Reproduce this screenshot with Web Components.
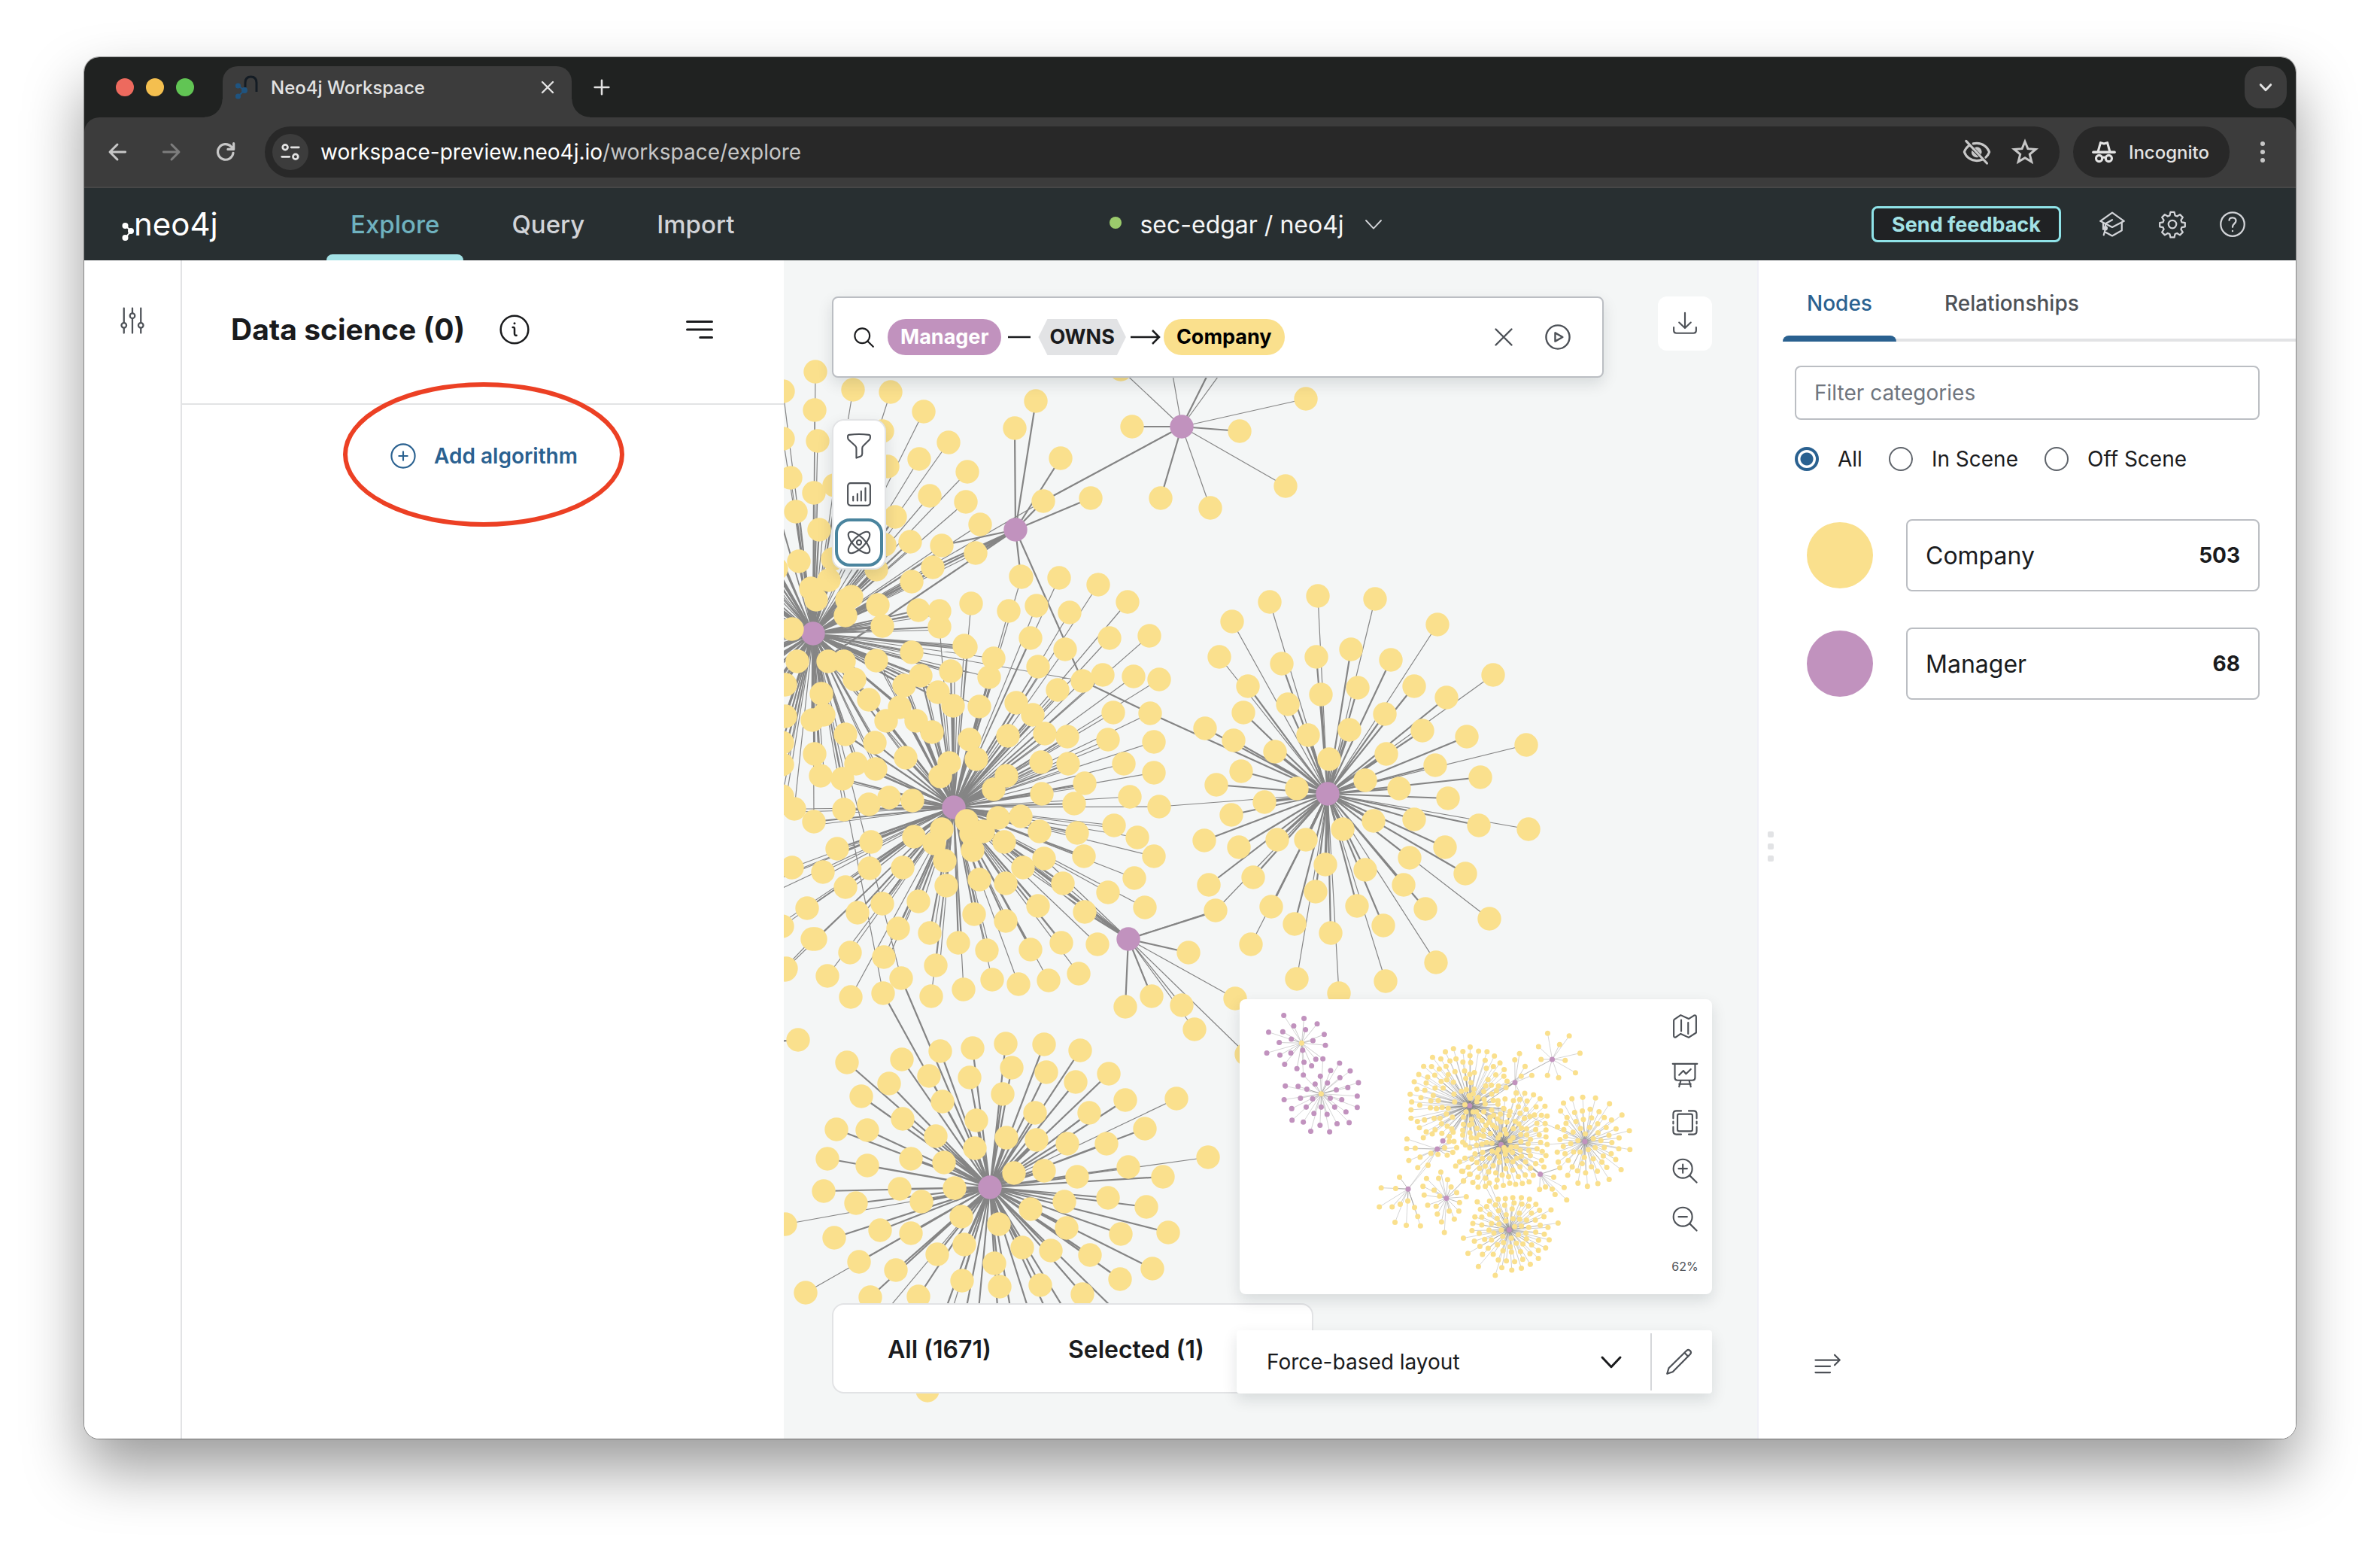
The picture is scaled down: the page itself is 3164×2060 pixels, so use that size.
<!DOCTYPE html>
<html lang="en">
<head>
<meta charset="utf-8">
<title>Neo4j Workspace</title>
<style>
  html { background: #fff; }
  body {
    margin: 0; box-sizing: border-box; min-height: 100vh; overflow: hidden;
    padding: 76px 112px 148px; display: flex;
    font-family: Inter, "Liberation Sans", sans-serif; font-size: 28px; color: #1a1b1d;
  }
</style>
</head>
<body>
<browser-window></browser-window>

<script>
/* ---------- icons ---------- */
const ICONS = {
  close: '<path d="M5 5 19 19M19 5 5 19"/>',
  plus: '<path d="M12 4V20M4 12H20"/>',
  chevron: '<path d="M4 8 12 16.500 20 8"/>',
  back: '<path d="M20 12H5M12 4.500 4.500 12 12 19.500"/>',
  forward: '<path d="M4 12H19M12 4.500 19.500 12 12 19.500"/>',
  reload: '<path d="M19.500 13A7.700 7.700 0 1 1 17.500 6.700L19.500 8.700M20 3.500V9.300H14.200"/>',
  tune: '<circle cx="6.500" cy="7" r="2.700"/><path d="M13 7H21M3 17H11"/><circle cx="17.500" cy="17" r="2.700"/>',
  eyeoff: '<path d="M5.800 6.300C3.500 8 2 10 1.500 12c1.500 4.300 5.500 7.300 10.500 7.300 1.800 0 3.400-.4 4.800-1M9 5c1-.2 2-.3 3-.3 5 0 9 3 10.500 7.300-.6 1.800-1.600 3.300-3 4.500M3 2.800 20.500 21.500"/><path d="M12 7.800a4.200 4.200 0 0 1 4.200 4.200L15.500 14.200 10 8.400ZM7.900 10.600 13.600 16.200A4.300 4.300 0 0 1 7.900 10.600Z" fill="currentColor" stroke="none"/>',
  star: '<path d="M12 2.800 14.600 9.100 21.500 9.600 16.200 14 17.900 20.700 12 17.100 6.100 20.700 7.800 14 2.500 9.600 9.400 9.100Z" stroke-linejoin="miter"/>',
  incognito: '<path d="M2 12.200H22" stroke-width="2.400"/><path d="M6.500 11.500 8.800 3.300 12 4.200 15.200 3.300 17.500 11.500"/><circle cx="7.500" cy="18" r="2.900"/><circle cx="16.500" cy="18" r="2.900"/><path d="M10.400 17.500Q12 16.400 13.600 17.500"/>',
  dots: '<g fill="currentColor" stroke="none"><circle cx="12" cy="4.700" r="2"/><circle cx="12" cy="12" r="2"/><circle cx="12" cy="19.300" r="2"/></g>',
  cap: '<path d="M1.500 9.200 12 1.800 22.500 9.200 12 14.600Z"/><path d="M20.500 10.500V17.500L12 22.300 6.500 19.300M4 11V16.500M12 8.200 6 11.500V16L4.500 21.500"/><circle cx="6" cy="15.500" r="1.300"/>',
  gear: '<circle cx="12" cy="12" r="3.500"/><path d="M10.300 1.300h3.400l.7 3 1.700.7 2.600-1.600 2.500 2.500-1.600 2.500.7 1.800 2.900.6v3.400l-2.900.6-.7 1.700 1.600 2.600-2.500 2.500-2.600-1.600-1.700.7-.7 2.900h-3.400l-.7-2.900-1.700-.7-2.600 1.600-2.500-2.500 1.600-2.600-.7-1.700-2.900-.6v-3.400l2.900-.6.7-1.800-1.600-2.500 2.500-2.500 2.600 1.600 1.700-.7z"/>',
  help: '<circle cx="12" cy="12" r="10.500"/><path d="M9 8.500C9.300 5.500 15 5.500 15 9c0 2.500-3 2.500-3 5.500"/><circle cx="12" cy="18" r=".8" fill="currentColor" stroke="none"/>',
  info: '<circle cx="12" cy="12" r="11"/><path d="M10.600 10.200Q12.200 10 12 11.500V15.200Q12 17 13.600 16.700"/><circle cx="12" cy="7" r=".9" fill="currentColor" stroke="none"/>',
  sliders: '<path d="M4.500 1V14M4.500 18.500V23M12 1V5.500M12 10V23M19.500 1V14M19.500 18.500V23"/><circle cx="4.500" cy="16.200" r="2.200"/><circle cx="12" cy="7.800" r="2.200"/><circle cx="19.500" cy="16.200" r="2.200"/>',
  menu: '<path d="M1 5H23M1 12H23M12.500 19H23"/>',
  add: '<circle cx="12" cy="12" r="11"/><path d="M12 8V16M8 12H16"/>',
  search: '<circle cx="10.500" cy="10.500" r="8.500"/><path d="M16.700 16.700 23 23"/>',
  play: '<circle cx="12" cy="12" r="11"/><path d="M9.500 8V16L16.500 12Z"/>',
  download: '<path d="M12 2V16M6.500 11 12 16.300 17.500 11M1.500 15.500V18.500Q1.500 21 4 21H20Q22.500 21 22.500 18.500V15.500"/>',
  funnel: '<path d="M1.500 2.500Q1.500 1.500 3 1.300 12 .2 21 1.300 22.500 1.500 22.500 2.500V4Q22.500 5.200 21.700 6L16 11.700Q15 12.700 15 14V19Q15 20.800 13.500 21.500L9.500 23V14.500Q9.500 12.700 8.500 11.700L2.300 6Q1.500 5.200 1.500 4Z"/>',
  chart: '<rect x="1.500" y="1.500" width="21" height="21" rx="2.500"/><path d="M6.500 14V18M10.500 11.500V18M14 9V18M18 6V18"/>',
  atom: '<circle cx="12" cy="12" r="2.300"/><ellipse cx="12" cy="12" rx="14" ry="5.600" transform="rotate(45 12 12)"/><ellipse cx="12" cy="12" rx="14" ry="5.600" transform="rotate(-45 12 12)"/>',
  map: '<path d="M2 5.500 8 1.500 15.500 5 20.500 1.800Q22.500 1.300 22.500 3V18L15.500 22.500 8 19 3.500 22.200Q1.500 22.800 1.500 21V6.500Z"/><path d="M8.500 6V16.500M15 8.500V19"/>',
  board: '<path d="M.5 2H23.500M2.500 2V15Q2.500 17.500 5 17.500H19Q21.500 17.500 21.500 15V2M8 18 6.500 23.500M16 18 17.500 23.500M6.500 21H17.500M6.500 12.500 10.500 8.500 13 11.500 17.500 7"/>',
  fit: '<rect x="5" y="4" width="14" height="16" rx="1.500"/><path d="M1 8V4Q1 1 4 1H8.500M15.500 1H20Q23 1 23 4V8M23 16V20Q23 23 20 23H15.500M8.500 23H4Q1 23 1 20V16M1 11V13M23 11V13"/>',
  zoomin: '<circle cx="10" cy="10" r="8.800"/><path d="M16.500 16.500 23 23M10 6V14M6 10H14"/>',
  zoomout: '<circle cx="10" cy="10" r="8.800"/><path d="M16.500 16.500 23 23M6 10H14"/>',
  pencil: '<path d="M1.500 22.500 3 17.500 18.800 2Q20.500.6 22 2.200 23.300 3.700 22 5.200L6.500 20.800ZM17 4 20.200 7.200"/>',
  collapse: '<path d="M1 9H22.500M18 4.500 22.500 9 18 13.500M1 14.500H14M1 20H14"/>'
};

customElements.define('ui-icon', class extends HTMLElement {
  constructor() { super(); this.attachShadow({ mode: 'open' }); }
  connectedCallback() {
    const size = this.getAttribute('size') || 36;
    const weight = this.getAttribute('weight') || 1.5;
    this.shadowRoot.innerHTML = `
      <style>
        :host { display: block; flex: none; width: ${size}px; height: ${size}px; }
        svg { display: block; width: 100%; height: 100%; overflow: visible; fill: none; stroke: currentColor;
              stroke-width: ${weight}; stroke-linecap: round; stroke-linejoin: round; }
      </style>
      <svg viewBox="0 0 24 24" aria-hidden="true">${ICONS[this.getAttribute('name')]}</svg>`;
  }
});

/* Registers an element whose shadow root is cloned from the given markup. */
function component(name, markup) {
  const template = document.createElement('template');
  template.innerHTML = markup;
  customElements.define(name, class extends HTMLElement {
    constructor() {
      super();
      this.attachShadow({ mode: 'open' }).append(template.content.cloneNode(true));
    }
  });
}
const BUTTON = 'button { font: inherit; color: inherit; background: none; border: 0; padding: 0; margin: 0; display: flex; align-items: center; justify-content: center; }';

/* ---------- graph data: each tile is [originX, originY, scaleX, scaleY] ---------- */
const HUBS = {
  A: [1081, 842], B: [1350, 704], C: [1571, 567], D: [1268, 1073], E: [1765, 1055], F: [1500, 1248], G: [1316, 1578],
  H: [889, 1099], I: [922, 1050], J: [716, 1336], K: [943, 1391], L: [84, 470], M: [200, 771]
};
const TILES = [
  { t: [1040, 370, 1 / 2.24, 1 / 2.306], groups: {
    A: '2,345 98,287 97,404 210,342 323,349 421,408 106,498 2,492 298,469 25,611 94,658 40,716 313,577 408,554 496,503 550,593 155,633 440,667 336,732 547,685 590,753 110,771 49,867 304,817 380,806 475,818 150,860 449,885 576,841 279,893 -18,890',
    B: '754,376 692,460 829,552 919,674 778,682 711,914 576,841 475,818 449,885 386,929',
    C: '1008,278 1042,454 1363,467 1127,673 1275,703 1498,637 1558,368 778,682' } },
  { t: [1040, 750, 1 / 2.45, 1 / 2.529], groups: {
    A: '92,80 110,120 152,52 225,108 210,118 205,172 310,136 327,208 421,57 443,155 512,158 512,210 33,218 50,325 150,327 202,327 306,323 421,297 593,272 597,278 450,375 397,406 234,388 127,434 282,454 383,480 10,404 10,510 135,505 98,523 338,527 437,527 508,431 549,360 557,475 673,380 689,315 207,572 106,637 126,711 197,720 302,600 240,670 304,688 403,650 487,565 641,477 0,600 0,672 0,780 40,822 201,825 102,866 977,393 329,1442 387,1391',
    D: '615,131 779,42 902,46 1028,69 1125,127 738,157 828,138 937,163 1066,247 1195,239 808,247 922,285 834,344 1044,373 977,393 897,423 1144,378 1228,388 763,466 815,506 1077,497 1198,502 855,570 929,580 735,577 609,590 1062,590 1211,598 632,656 543,668 515,713 842,665 930,671 1113,671 1211,700 729,710 688,755 984,736 846,772 951,804 1133,782 1227,815 600,862 519,889 703,853 776,847 615,905 655,898 620,960 723,934 837,898 960,902 1080,878 1157,918 1211,982 982,980 853,990 783,1020 727,1072 643,1060 913,1072 1147,1055 1060,1102 1181,1154 985,1169 832,1149 728,1199 624,1177 534,1080 530,997 495,937 428,915 290,933 180,957 391,1020 285,1022 132,1034 33,1018 205,1085 443,1133 325,1140 244,1171 80,1157 378,1225 479,1239 573,1271 667,1298 808,1296 908,1271 1026,1276 966,1376 868,1399 770,1411 684,1396 591,1428 501,1349 484,1452 330,1319 222,1453 146,1384 220,1305 109,1260 12,1358 0,1217 282,808 349,784 425,794 450,375 397,406 383,480 338,527 437,527 508,431 549,360 557,475 673,380 689,315 207,572 302,600 240,670 304,688 403,650 487,565 641,477 197,720 282,454 201,825 40,822 102,866 512,210 593,272 306,323 234,388 150,327',
    F: '1322,1305 1116,1486 1204,1451 1300,1481 1475,1458 1342,1563 1412,1164 985,1169 913,1072 853,990 783,1020 723,934',
    E: '1412,1164 1227,815' } },
  { t: [1540, 370, 1 / 2.0103, 1 / 1.6333], groups: {
    E: '298,702 427,689 579,695 746,751 197,745 163,821 329,837 422,821 514,805 622,828 894,861 240,885 345,924 435,904 532,889 684,886 770,909 228,943 606,945 400,991 511,980 705,982 824,995 983,1012 124,977 201,1003 312,1028 456,1043 609,1032 739,1056 861,1083 222,1069 552,1089 155,1100 369,1107 643,1107 774,1128 283,1137 196,1165 122,1220 216,1234 317,1218 394,1218 493,1196 574,1178 683,1174 857,1188 989,1196 765,1234 446,1272 552,1283 671,1258 820,1292 135,1317 254,1300 421,1331 656,1316 713,1368 885,1390 301,1363 364,1401 460,1421 531,1362 601,1405 248,1446 369,1521 483,1552 608,1525 742,1485' } },
  { t: [1040, 1300, 1 / 2.24, 1 / 2.376], groups: {
    F: '1382,241',
    K: '48,195',
    G: '192,265 356,256 471,230 566,221 665,206 780,209 888,228 318,333 436,310 558,314 683,282 787,297 874,328 973,302 235,373 477,389 657,366 753,425 915,425 1022,386 1173,380 162,478 252,481 358,445 458,500 578,449 574,538 668,504 758,510 848,523 966,522 1080,476 134,571 254,591 382,571 482,581 689,615 780,608 879,627 1031,597 1134,628 1267,565 123,672 219,710 349,666 415,706 512,664 840,705 969,693 1084,722 1150,803 1007,808 740,730 847,788 8,777 155,820 291,795 383,806 532,754 645,778 228,895 338,923 461,871 543,840 714,851 800,859 917,875 1103,918 1005,951 632,901 535,954 647,973 768,970 894,997 70,992 262,1007 406,1004 432,1303' } },
  { t: [-500, 87, 2.107, 1.767], groups: {
    G: '775,967 841,971 869,979 896,973 921,960 944,940 831,945 854,948 877,951 900,943',
    C: '970,184 1031,193 1004,222',
    D: '722,615 711,630 728,647',
    A: '705,236 682,246 646,265 669,270 712,270 695,277 621,295 643,296 684,295 607,322 632,331 652,325 665,304 690,323 709,313 594,347 628,351 670,346 686,340 705,348 602,372 624,375 653,368 676,368 706,388 583,389 648,392 587,414 613,400 641,411 662,410 673,433 585,441 610,425 640,434 657,437 585,469 603,480 623,475 650,470 667,470 708,414 690,436 685,455 702,466 609,501 628,515 653,508 671,488 687,496 645,522 700,505 620,534 672,520 693,531 704,516 675,545 659,573',
    H: '574,539 573,571 597,570 579,611 611,600 641,587 661,591 680,569 604,635 633,627 687,593 703,584 693,547 706,547 714,568 577,707',
    J: '501,703 542,705 553,667 496,767 532,767 555,758 576,747 595,769 604,799 540,819 572,829 612,831 633,627',
    K: '629,672 663,671 669,650 688,675 619,698 650,711 698,700 714,719 722,752 720,781 693,781 707,808 671,817 659,791 679,853 656,765 632,761 622,727 666,731 733,680 750,657',
    L: '227,124 284,134 321,152 255,159 288,172 184,180 224,179 341,188 248,204 309,209 214,215 344,224 179,250 216,257 247,250 280,241 229,288 264,303 284,281 305,293 317,271 337,270 282,324',
    M: '384,284 359,309 414,310 330,328 385,333 315,354 350,351 437,350 231,361 267,362 292,372 375,374 407,366 434,395 228,407 274,402 308,404 358,402 390,407 249,437 290,432 332,432 370,432 434,433 402,448 312,453 349,456 250,476 282,482 329,493 377,488 411,484 303,513 356,515 337,270 282,324' } }
];

function buildGraph() {
  const nodes = new Map(), edges = { thin: '', mid: '', thick: '' };
  const hubPoints = Object.values(HUBS);
  for (const { t, groups } of TILES)
    for (const [hub, list] of Object.entries(groups))
      for (const pair of list.split(' ')) {
        const [px, py] = pair.split(',').map(Number);
        const x = Math.round(t[0] + px * t[2]), y = Math.round(t[1] + py * t[3]);
        const swapped = hub === 'L' || hub === 'M';
        if (!hubPoints.some(([a, b]) => Math.hypot(a - x, b - y) < 8))
          nodes.set(x + ',' + y, [x, y, swapped ? 'm' : 'c']);
        const [hx, hy] = HUBS[hub];
        const d = Math.hypot(x - hx, y - hy);
        const near = hub === 'A' ? 130 : hub === 'C' || hub === 'B' || hub === 'F' ? 0 : 95;
        const far = hub === 'G' ? 262 : hub === 'E' ? 212 : hub === 'A' || hub === 'D' ? 190 : hub === 'F' ? 110 : hub === 'C' ? 100 : 180;
        const w = d < near ? 'thick' : d < far ? 'mid' : 'thin';
        edges[w] += `M${hx} ${hy}L${x} ${y}`;
        if ((hub === 'A' || hub === 'D') && d > 120 && d < 230) edges.thin += `M${hx} ${hy}L${x + 5} ${y + 4}`;
      }
  edges.mid += 'M1350 704L1439 905L1529 948L1765 1055M1571 567L1387 666M1350 704L1120 860M1350 704L1105 870M1198 1300L1316 1578M1174 1320L1316 1578M1500 1248L1617 1211';
  edges.thin += 'M1387 666L1081 842';
  edges.thick += 'M1500 1248L1268 1073M1350 704L1297 735';
  const circle = ([x, y, k]) => `<circle class="${k}" cx="${x}" cy="${y}" r="15.700"/>`;
  const hubs = Object.entries(HUBS).map(([k, [x, y]]) => [x, y, k === 'L' || k === 'M' ? 'c' : 'm']);
  return `<path class="thin" d="${edges.thin}"/><path class="mid" d="${edges.mid}"/><path class="thick" d="${edges.thick}"/>`
    + hubs.map(circle).join('') + [...nodes.values()].map(circle).join('');
}

customElements.define('graph-view', class extends HTMLElement {
  constructor() { super(); this.attachShadow({ mode: 'open' }); }
  connectedCallback() {
    const mini = this.hasAttribute('overview');
    this.shadowRoot.innerHTML = `
      <style>
        :host { display: block; overflow: hidden; }
        svg { display: block; width: 100%; height: 100%; }
        path { fill: none; stroke: #858585; }
        .thin { stroke-width: ${mini ? 2.5 : 1.2}; } .mid { stroke-width: ${mini ? 3 : 2.2}; } .thick { stroke-width: ${mini ? 4 : 3.4}; }
        ${mini ? 'path { opacity: .6; }' : ''}
        .c { fill: #fae08d; } .m { fill: #c192be; }
      </style>
      <svg role="img" aria-label="Graph of managers and companies"
           viewBox="${mini ? '-284 210 2482 1750' : '1042 346 1294 1566'}"
           preserveAspectRatio="xMinYMin ${mini ? 'meet' : 'slice'}">${buildGraph()}</svg>`;
  }
});

/* ---------- browser chrome ---------- */
component('tab-strip', `
  <style>
    :host { display: flex; align-items: center; height: 80px; box-sizing: border-box; padding: 12px 12px 0 42px; background: #202221; color: #e3e3e3; font-size: 24px; font-weight: 500; }
    ${BUTTON}
    .lights { display: flex; gap: 16px; padding-bottom: 12px; }
    .lights i { width: 24px; height: 24px; border-radius: 50%; background: #ed6a5e; }
    .lights i:nth-child(2) { background: #f4bf4f; }
    .lights i:nth-child(3) { background: #61c554; }
    .tab { position: relative; display: flex; align-items: center; box-sizing: border-box; width: 464px; height: 68px; margin-left: 38px; padding: 0 20px 12px 16px; background: #3c3c3c; border-radius: 20px 20px 0 0; }
    .tab::before, .tab::after { content: ""; position: absolute; bottom: 0; width: 24px; height: 24px; }
    .tab::before { right: 100%; background: radial-gradient(circle at 0 0, transparent 23px, #3c3c3c 24px); }
    .tab::after { left: 100%; background: radial-gradient(circle at 100% 0, transparent 23px, #3c3c3c 24px); }
    .tab span { flex: 1; padding-left: 16px; }
    .fav { width: 32px; height: 32px; }
    .new { margin: 0 auto 12px 26px; }
    .list { width: 56px; height: 56px; border-radius: 20px; background: #3c3c3c; margin-bottom: 12px; }
  </style>
  <div class="lights"><i></i><i></i><i></i></div>
  <div class="tab">
    <svg class="fav" viewBox="0 0 32 32" fill="none"><path d="M14 16V10Q14 2 21.500 2 29 2 29 10V22" stroke="#141c24" stroke-width="3"/><path d="M4.500 14 13 20 4.500 28" stroke="#1f5480" stroke-width="2"/><g fill="#1f5480"><circle cx="4.500" cy="14" r="3.600"/><circle cx="13" cy="20" r="4"/><circle cx="4.500" cy="28" r="3.600"/></g></svg>
    <span>Neo4j Workspace</span>
    <button aria-label="Close tab"><ui-icon name="close" size="24" weight="2.400"></ui-icon></button>
  </div>
  <button class="new" aria-label="New tab"><ui-icon name="plus" size="28" weight="2.200"></ui-icon></button>
  <button class="list" aria-label="Search tabs"><ui-icon name="chevron" size="20" weight="3.500"></ui-icon></button>`);

component('address-bar', `
  <style>
    :host { display: block; background: #202221; }
    .bar { display: flex; align-items: center; box-sizing: border-box; height: 94px; padding: 10px 26px 10px 28px; background: #3c3c3c; border-bottom: 2px solid #474747; border-radius: 20px 20px 0 0; color: #c7c7c7; }
    ${BUTTON}
    .nav { display: flex; gap: 40px; }
    .nav button:nth-child(2) { color: #7d7d7d; }
    .omni { flex: 1; display: flex; align-items: center; height: 68px; box-sizing: border-box; margin-left: 36px; padding: 0 28px 0 10px; border-radius: 34px; background: #282828; gap: 27px; }
    .site { width: 48px; height: 48px; border-radius: 50%; background: #3c3c3c; color: #e3e3e3; }
    .url { flex: 1; margin-left: -11px; font-size: 28px; }
    .url b { font-weight: 400; color: #fff; }
    .mode { display: flex; align-items: center; gap: 16px; box-sizing: border-box; height: 68px; margin-left: 18px; padding: 0 27px 0 24px; border-radius: 34px; background: #282828; color: #e3e3e3; font-size: 24px; font-weight: 500; }
    .more { margin-left: 26px; }
  </style>
  <div class="bar">
    <div class="nav">
      <button aria-label="Back"><ui-icon name="back" size="32" weight="2.200"></ui-icon></button>
      <button aria-label="Forward"><ui-icon name="forward" size="32" weight="2.200"></ui-icon></button>
      <button aria-label="Reload"><ui-icon name="reload" size="32" weight="2.400"></ui-icon></button>
    </div>
    <div class="omni">
      <button class="site" aria-label="Site information"><ui-icon name="tune" size="30" weight="2.200"></ui-icon></button>
      <span class="url"><b>workspace-preview.neo4j.io</b>/workspace/explore</span>
      <button aria-label="Tracking protection"><ui-icon name="eyeoff" size="38" weight="2"></ui-icon></button>
      <button aria-label="Bookmark"><ui-icon name="star" size="36" weight="2"></ui-icon></button>
    </div>
    <div class="mode"><ui-icon name="incognito" size="34" weight="2.200"></ui-icon>Incognito</div>
    <button class="more" aria-label="Menu"><ui-icon name="dots" size="36"></ui-icon></button>
  </div>`);

/* ---------- application header ---------- */
component('app-header', `
  <style>
    :host { display: grid; grid-template-columns: 1fr auto 1fr; align-items: center; height: 96px; box-sizing: border-box; padding: 0 66px 0 50px; background: #282f31; color: #d2d4d8; font-size: 32px; }
    ${BUTTON}
    .left { display: flex; height: 96px; align-items: center; }
    .logo { display: flex; align-items: center; width: 238px; color: #fff; font-size: 42px; line-height: 48px; }
    .logo svg { width: 16px; height: 32px; margin: 16px 0 0 0; flex: none; }
    .tabs { display: flex; align-self: stretch; gap: 32px; margin-left: 34px; }
    .tabs a { position: relative; display: flex; align-items: center; padding: 0 32px; font-size: 33px; font-weight: 500; color: inherit; text-decoration: none; }
    .tabs a.on { color: #6fb2bf; }
    .tabs a.on::after { content: ""; position: absolute; left: 0; right: 0; bottom: 0; height: 8px; border-radius: 8px 8px 0 0; background: #a3e2e6; }
    .db { gap: 24px; color: #f5f6f6; margin-left: 168px; }
    .db i { width: 16px; height: 16px; border-radius: 50%; background: #9bcb6c; margin-bottom: 4px; }
    .db ui-icon { color: #d2d4d8; }
    .right { display: flex; justify-content: flex-end; align-items: center; gap: 44px; }
    .feedback { box-sizing: border-box; width: 252px; height: 48px; border: 3px solid #8fe3e8; border-radius: 8px; background: #202224; color: #a3e2e6; font-size: 27px; font-weight: 700; margin-right: 6px; }
  </style>
  <div class="left">
    <div class="logo"><svg viewBox="0 0 16 32"><g fill="#fff"><circle cx="4.500" cy="10" r="4"/><circle cx="12" cy="17" r="4"/><circle cx="4.500" cy="26" r="4"/></g><path d="M5 10 12 17 5 26" stroke="#fff" stroke-width="2" fill="none"/></svg>neo4j</div>
    <nav class="tabs"><a class="on" href="#explore">Explore</a><a href="#query">Query</a><a href="#import">Import</a></nav>
  </div>
  <button class="db"><i></i>sec-edgar / neo4j<ui-icon name="chevron" size="30" weight="1.500"></ui-icon></button>
  <div class="right">
    <button class="feedback">Send feedback</button>
    <button aria-label="Learn"><ui-icon name="cap"></ui-icon></button>
    <button aria-label="Settings"><ui-icon name="gear"></ui-icon></button>
    <button aria-label="Help"><ui-icon name="help"></ui-icon></button>
  </div>`);

/* ---------- left side ---------- */
component('side-rail', `
  <style>
    :host { display: flex; justify-content: center; align-items: flex-start; box-sizing: border-box; width: 130px; flex: none; padding-top: 62px; border-right: 2px solid #e2e3e5; color: #4d5157; }
    ${BUTTON}
  </style>
  <button aria-label="Perspective settings"><ui-icon name="sliders"></ui-icon></button>`);

component('science-panel', `
  <style>
    :host { display: block; width: 800px; flex: none; }
    ${BUTTON}
    header { display: flex; align-items: center; padding: 64px 94px 70px 65px; border-bottom: 2px solid #e2e3e5; }
    h1 { margin: 0 46px 0 0; font-size: 39px; line-height: 56px; font-weight: 700; }
    header button:last-child { margin-left: auto; }
    .body { display: flex; justify-content: center; padding: 44px 0; }
    .add { position: relative; gap: 24px; height: 48px; padding-left: 3px; color: #2a6190; font-size: 28px; font-weight: 600; }
    .mark { position: absolute; left: 50%; top: 50%; width: 374px; height: 194px; translate: -50% -50%; overflow: visible; pointer-events: none; }
  </style>
  <header>
    <h1>Data science (0)</h1>
    <button aria-label="Information"><ui-icon name="info" size="40" weight="1.500"></ui-icon></button>
    <button aria-label="Panel menu"><ui-icon name="menu" weight="2"></ui-icon></button>
  </header>
  <div class="body">
    <button class="add"><ui-icon name="add" size="34"></ui-icon>Add algorithm
      <svg class="mark" viewBox="0 0 374 194"><ellipse cx="188" cy="95" rx="184" ry="93" fill="none" stroke="#ec4024" stroke-width="6"/></svg>
    </button>
  </div>`);

/* ---------- canvas ---------- */
component('search-box', `
  <style>
    :host { display: flex; align-items: center; box-sizing: border-box; width: 1026px; height: 108px; padding: 0 42px 0 26px; border: 2px solid #bbbec3; border-radius: 8px; background: #fff; box-shadow: 0 8px 20px rgba(12, 26, 37, .12); font-weight: 700; font-size: 27px; color: #1a1b1d; }
    ${BUTTON}
    .pill { height: 48px; line-height: 48px; padding: 0 17px; border-radius: 24px; background: #c192be; color: #fff; margin-left: 18px; }
    .company { background: #fae08d; color: #000; margin-left: 4px; }
    .type { height: 48px; line-height: 48px; padding: 0 15px; background: #e2e3e5; clip-path: polygon(12px 0, calc(100% - 12px) 0, 100% 50%, calc(100% - 12px) 100%, 12px 100%, 0 50%); }
    svg { height: 24px; fill: none; stroke: #1a1b1d; stroke-width: 2.500; flex: none; }
    .dash { width: 49px; } .arrow { width: 46px; }
    input { flex: 1; min-width: 0; border: 0; outline: 0; background: none; font: inherit; }
    .go { margin-left: 37px; }
    .clear, .go { color: #4d5157; }
  </style>
  <ui-icon name="search" size="28" weight="1.800"></ui-icon>
  <span class="pill">Manager</span>
  <svg class="dash" viewBox="0 0 49 24"><path d="M9 12H39"/></svg>
  <span class="type">OWNS</span>
  <svg class="arrow" viewBox="0 0 46 24"><path d="M6 12H44M35 3 44 12 35 21"/></svg>
  <span class="pill company">Company</span>
  <input aria-label="Search graph">
  <button class="clear" aria-label="Clear"><ui-icon name="close" weight="1.600"></ui-icon></button>
  <button class="go" aria-label="Run search"><ui-icon name="play" size="34" weight="1.700"></ui-icon></button>`);

component('tool-column', `
  <style>
    :host { display: flex; flex-direction: column; box-sizing: border-box; width: 72px; padding: 2px; border: 2px solid #e2e3e5; border-radius: 16px; background: #fff; box-shadow: 0 8px 20px rgba(12, 26, 37, .12); color: #4d5157; }
    ${BUTTON}
    button { box-sizing: border-box; width: 64px; height: 64px; }
    .on { border: 4px solid #4a849e; border-radius: 20px; }
  </style>
  <button aria-label="Filter"><ui-icon name="funnel" size="34"></ui-icon></button>
  <button aria-label="Slicer"><ui-icon name="chart" size="34"></ui-icon></button>
  <button class="on" aria-label="Data science"><ui-icon name="atom" size="32" weight="1.600"></ui-icon></button>`);

component('mini-map', `
  <style>
    :host { display: flex; height: 392px; border-radius: 8px; background: #fff; box-shadow: 0 8px 20px rgba(12, 26, 37, .12); color: #4d5157; }
    ${BUTTON}
    graph-view { flex: 1; }
    .tools { width: 72px; padding-top: 4px; display: flex; flex-direction: column; align-items: center; }
    button { width: 64px; height: 64px; }
    .zoom { font-size: 16px; line-height: 24px; margin-top: 19px; }
  </style>
  <graph-view overview></graph-view>
  <div class="tools">
    <button aria-label="Map"><ui-icon name="map" size="34"></ui-icon></button>
    <button aria-label="Presentation"><ui-icon name="board" size="34"></ui-icon></button>
    <button aria-label="Fit to screen"><ui-icon name="fit" size="34"></ui-icon></button>
    <button aria-label="Zoom in"><ui-icon name="zoomin" size="34"></ui-icon></button>
    <button aria-label="Zoom out"><ui-icon name="zoomout" size="34"></ui-icon></button>
    <span class="zoom">62%</span>
  </div>`);

component('layout-picker', `
  <style>
    :host { display: flex; align-items: center; height: 84px; border-radius: 4px; background: #fff; box-shadow: 0 8px 20px rgba(12, 26, 37, .12); }
    ${BUTTON}
    .field { flex: 1; display: grid; align-items: center; }
    select, .field ui-icon { grid-area: 1 / 1; }
    select { appearance: none; border: 0; outline: 0; margin: 0; background: none; font: inherit; font-size: 28px; color: inherit; height: 84px; padding: 0 80px 0 40px; }
    .field ui-icon { justify-self: end; margin-right: 34px; pointer-events: none; }
    .edit { box-sizing: border-box; width: 82px; height: 76px; padding-right: 8px; border-left: 2px solid #d5d7da; color: #4d5157; }
  </style>
  <div class="field"><select aria-label="Layout"><option>Force-based layout</option></select><ui-icon name="chevron" weight="2"></ui-icon></div>
  <button class="edit" aria-label="Edit layout"><ui-icon name="pencil"></ui-icon></button>`);

component('graph-stage', `
  <style>
    :host { display: block; position: relative; flex: 1; min-width: 0; background: #f4f6f6; overflow: hidden; }
    ${BUTTON}
    graph-view { position: absolute; inset: 0; }
    .over { position: relative; display: flex; justify-content: space-between; align-items: flex-start; padding: 48px 60px 0 64px; }
    .left { display: flex; flex-direction: column; gap: 55px; }
    .save { width: 72px; height: 72px; border-radius: 12px; background: #fff; color: #4d5157; }
    .count { position: absolute; left: 64px; bottom: 60px; display: flex; gap: 102px; box-sizing: border-box; width: 640px; height: 120px; padding: 2px 72px 0; border: 2px solid #e2e3e5; border-radius: 16px; background: #fff; font-size: 32px; font-weight: 600; }
    .dock { position: absolute; right: 60px; bottom: 60px; width: 632px; display: flex; flex-direction: column; gap: 48px; }
    mini-map { margin-left: 4px; }
  </style>
  <graph-view></graph-view>
  <div class="over">
    <div class="left"><search-box></search-box><tool-column></tool-column></div>
    <button class="save" aria-label="Download"><ui-icon name="download" size="34"></ui-icon></button>
  </div>
  <div class="count"><button>All (1671)</button><button>Selected (1)</button></div>
  <div class="dock"><mini-map></mini-map><layout-picker></layout-picker></div>`);

/* ---------- legend ---------- */
component('category-row', `
  <style>
    :host { display: flex; align-items: center; gap: 44px; padding-left: 16px; }
    i { width: 88px; height: 88px; border-radius: 50%; background: var(--category); flex: none; }
    button { flex: 1; display: flex; justify-content: space-between; align-items: center; box-sizing: border-box; height: 96px; padding: 0 24px; margin: 0; border: 2px solid #bbbec3; border-radius: 8px; background: #fff; color: inherit; font: inherit; font-size: 32px; }
    ::slotted(b) { font-size: 28px; font-weight: 700; }
  </style>
  <i></i><button><span><slot></slot></span><slot name="count"></slot></button>`);

component('legend-panel', `
  <style>
    :host { position: relative; display: flex; flex-direction: column; box-sizing: border-box; width: 716px; flex: none; border-left: 2px solid #f0f0f7; background: #fff; font-size: 28px; }
    ${BUTTON}
    .tabs { display: flex; gap: 32px; box-sizing: border-box; height: 108px; margin-left: 32px; border-bottom: 4px solid #e2e3e5; font-weight: 500; color: #4d5157; }
    .tabs button { position: relative; padding: 9px 32px 0; font-weight: 500; }
    .tabs .on { color: #2a6190; }
    .on::after { content: ""; position: absolute; left: 0; right: 0; bottom: -4px; height: 8px; border-radius: 8px 8px 0 0; background: #2a6190; }
    .body { padding: 32px 48px 0; }
    .filter { display: block; box-sizing: border-box; width: 100%; height: 72px; padding: 0 24px; border: 2px solid #bbbec3; border-radius: 8px; background: #fff; font: inherit; color: inherit; }
    .filter::placeholder { color: #6f757e; opacity: 1; }
    .scope { display: flex; gap: 35px; margin: 36px 0 64px; }
    label { display: flex; align-items: center; gap: 25px; line-height: 32px; }
    input[type=radio] { appearance: none; box-sizing: border-box; width: 32px; height: 32px; margin: 0; border: 2px solid #5e636a; border-radius: 50%; background: #fff; }
    input[type=radio]:checked { border: 4px solid #2a6190; background: radial-gradient(circle, #2a6190 8px, #fff 9px); }
    .rows { display: flex; flex-direction: column; gap: 48px; }
    .grip { position: absolute; left: 12px; top: 50%; translate: 0 -24px; display: flex; flex-direction: column; gap: 8px; }
    .grip i { width: 8px; height: 8px; border-radius: 2px; background: #e2e3e5; }
    .fold { margin: auto 0 82px 74px; align-self: flex-start; color: #4d5157; }
  </style>
  <div class="tabs"><button class="on">Nodes</button><button>Relationships</button></div>
  <div class="body">
    <input class="filter" type="text" placeholder="Filter categories" aria-label="Filter categories">
    <div class="scope">
      <label><input type="radio" name="scope" checked>All</label>
      <label><input type="radio" name="scope">In Scene</label>
      <label><input type="radio" name="scope">Off Scene</label>
    </div>
    <div class="rows">
      <category-row style="--category: #fae08d">Company<b slot="count">503</b></category-row>
      <category-row style="--category: #c192be">Manager<b slot="count">68</b></category-row>
    </div>
  </div>
  <div class="grip"><i></i><i></i><i></i></div>
  <button class="fold" aria-label="Collapse panel"><ui-icon name="collapse"></ui-icon></button>`);

component('browser-window', `
  <style>
    :host { flex: 1; min-width: 0; display: flex; border-radius: 20px; box-shadow: 0 0 0 1px rgba(0, 0, 0, .35), 0 40px 80px rgba(0, 0, 0, .4); }
    .frame { flex: 1; min-width: 0; display: flex; flex-direction: column; overflow: hidden; border-radius: 20px; background: #fff; }
    main { flex: 1; display: flex; min-height: 0; }
  </style>
  <div class="frame">
    <tab-strip></tab-strip>
    <address-bar></address-bar>
    <app-header></app-header>
    <main><side-rail></side-rail><science-panel></science-panel><graph-stage></graph-stage><legend-panel></legend-panel></main>
  </div>`);
</script>
</body>
</html>
